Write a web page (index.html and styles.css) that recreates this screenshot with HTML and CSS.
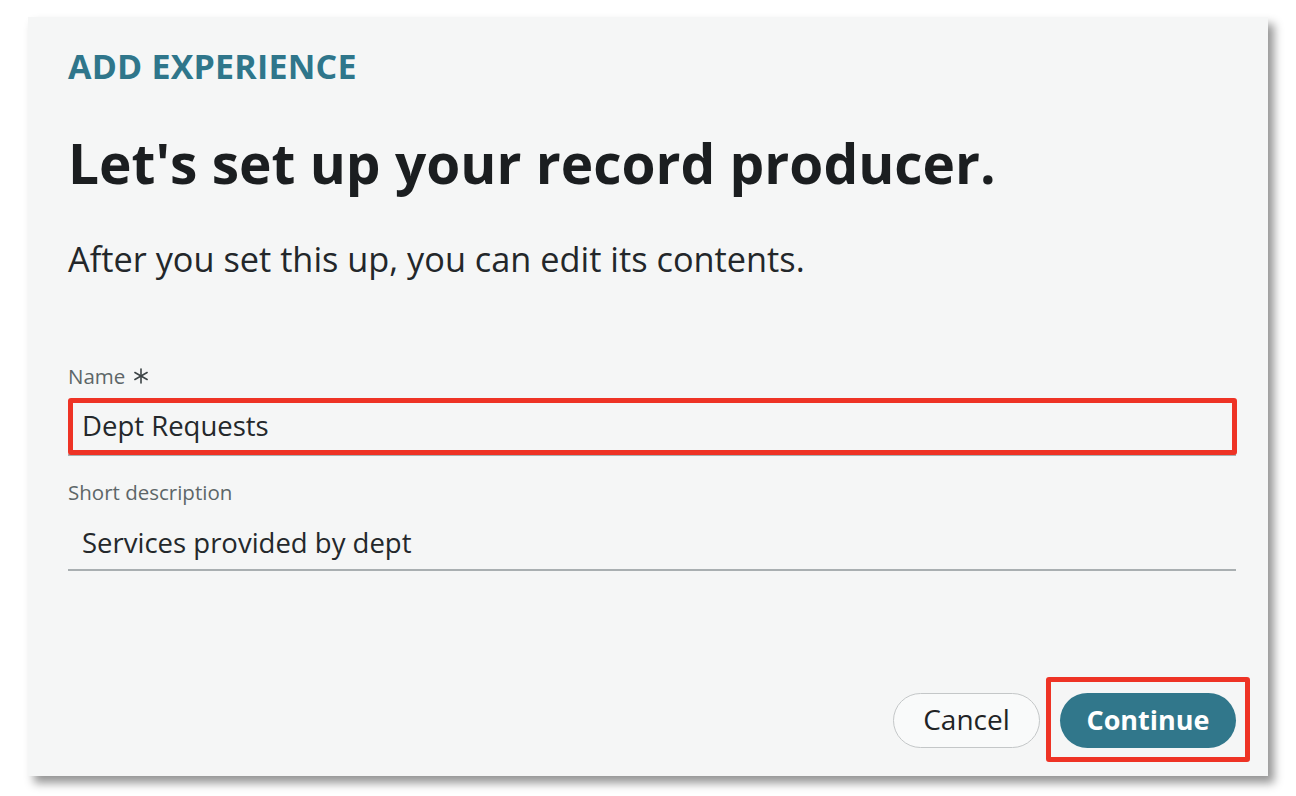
FILE: index.html
```html
<!DOCTYPE html>
<html lang="en">
<head>
<meta charset="utf-8">
<title>Add experience</title>
<link rel="stylesheet" href="styles.css">
</head>
<body>
<div class="card">
  <div class="eyebrow">ADD EXPERIENCE</div>
  <h1 class="title">Let's set up your record producer.</h1>
  <p class="subtitle">After you set this up, you can edit its contents.</p>
  <div class="fields">
    <div class="field field-name">
      <div class="label">Name <svg class="req" width="16" height="16" viewBox="0 0 16 16" aria-label="required"><g stroke="#3d4446" stroke-width="1.6" stroke-linecap="round"><line x1="8" y1="1" x2="8" y2="15"/><line x1="1.9" y1="4.5" x2="14.1" y2="11.5"/><line x1="1.9" y1="11.5" x2="14.1" y2="4.5"/></g></svg></div>
      <div class="input">
        <span class="value">Dept Requests</span>
        <div class="highlight highlight-input"></div>
      </div>
    </div>
    <div class="field field-desc">
      <div class="label">Short description</div>
      <div class="input">
        <span class="value">Services provided by dept</span>
      </div>
    </div>
  </div>
  <div class="actions">
    <button class="btn btn-cancel">Cancel</button>
    <div class="primary-wrap">
      <button class="btn btn-primary">Continue</button>
      <div class="highlight highlight-btn"></div>
    </div>
  </div>
</div>
</body>
</html>
```

FILE: styles.css
```css
* { box-sizing: border-box; }
html, body { margin: 0; padding: 0; background: #ffffff; }
body {
  font-family: "Open Sans", "Noto Sans", sans-serif;
  color: #1c1f21;
  width: 1296px;
  height: 796px;
  overflow: hidden;
}
.card {
  margin: 17px 0 0 28px;
  width: 1240px;
  height: 759px;
  background: #f5f6f6;
  box-shadow: 6px 7px 9px rgba(0, 0, 0, 0.42);
  padding: 29px 32px 28px 40px;
  display: flex;
  flex-direction: column;
}
.eyebrow {
  font-size: 34px;
  line-height: 40px;
  font-weight: 700;
  color: #2f768b;
  letter-spacing: 0.2px;
}
.title {
  margin: 45px 0 0 0;
  font-size: 55px;
  line-height: 64px;
  font-weight: 700;
  color: #1b1e20;
}
.subtitle {
  margin: 42px 0 0 0;
  font-size: 34.3px;
  line-height: 44px;
  font-weight: 400;
  color: #23272a;
}
.fields {
  margin-top: 83px;
  display: flex;
  flex-direction: column;
  gap: 24px;
}
.label {
  display: flex;
  align-items: center;
  gap: 8px;
  font-size: 20.5px;
  line-height: 24px;
  color: #5d6668;
}
.req {
  display: block;
  margin-top: -1px;
}
.input {
  position: relative;
  margin-top: 22px;
  padding: 0 0 12px 14px;
  border-bottom: 2px solid #a9afb1;
}
.field-desc .input {
  margin-top: 23px;
  padding-bottom: 10px;
}
.value {
  display: block;
  font-size: 27.5px;
  line-height: 32px;
  color: #24282b;
}
.highlight {
  position: absolute;
  border: 5px solid #ee3325;
  border-radius: 3px;
}
.highlight-input {
  top: -12px;
  bottom: -1px;
  left: 0;
  right: -1px;
}
.actions {
  margin-top: auto;
  display: flex;
  justify-content: flex-end;
  align-items: center;
  gap: 20px;
}
.btn {
  height: 55px;
  border-radius: 28px;
  font-family: "Open Sans", "Noto Sans", sans-serif;
  line-height: 1;
  padding: 0 0 3px 0;
  cursor: pointer;
}
.btn-cancel {
  width: 147px;
  background: #f9fafa;
  border: 1px solid #c4c7c8;
  color: #1f2325;
  font-size: 28px;
}
.primary-wrap {
  position: relative;
}
.btn-primary {
  display: block;
  width: 176px;
  background: #31778b;
  border: none;
  color: #ffffff;
  font-weight: 700;
  font-size: 27px;
}
.highlight-btn {
  top: -16px;
  bottom: -14px;
  left: -14px;
  right: -14px;
}
```
